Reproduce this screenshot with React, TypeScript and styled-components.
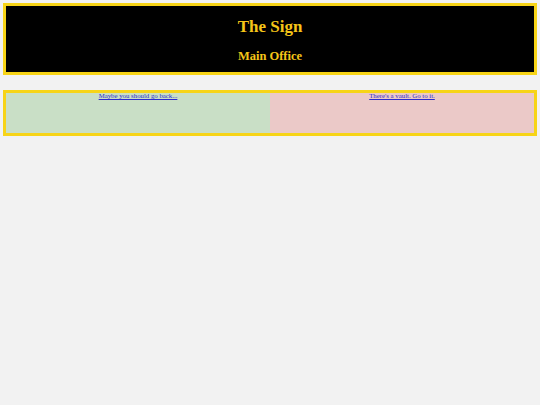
import React from "react"
import styled, { createGlobalStyle } from "styled-components"

const GlobalStyle = createGlobalStyle`
  html, body {
    margin: 0;
    padding: 0;
    background: #f2f2f2;
    font-family: "Liberation Serif", "Times New Roman", serif;
  }
`

const Page = styled.div`
  padding: 3px;
  display: flex;
  flex-direction: column;
  gap: 15px;
`

const Sign = styled.header`
  background: #000;
  border: 3px solid #f7d417;
  height: 66px;
  display: flex;
  flex-direction: column;
  align-items: center;
  color: #f5c518;
`

const Title = styled.h1`
  margin: 11px 0 0;
  font-size: 17px;
  line-height: 20px;
  font-weight: bold;
`

const Subtitle = styled.h2`
  margin: 12px 0 0;
  font-size: 12.5px;
  line-height: 15px;
  font-weight: bold;
`

const Doors = styled.div`
  border: 3px solid #f7d417;
  display: grid;
  grid-template-columns: 1fr 1fr;
  height: 40px;
`

const Door = styled.div<{ $tint: string }>`
  background: ${({ $tint }) => $tint};
  text-align: center;
  font-size: 6.8px;
  line-height: 6px;
`

const DoorLink = styled.a`
  color: #2b2bd0;
  text-decoration: underline;
`

export default function App() {
  return (
    <>
      <GlobalStyle />
      <Page>
        <Sign>
          <Title>The Sign</Title>
          <Subtitle>Main Office</Subtitle>
        </Sign>
        <Doors>
          <Door $tint="#c9dfc6">
            <DoorLink href="#">Maybe you should go back...</DoorLink>
          </Door>
          <Door $tint="#ebc9c8">
            <DoorLink href="#">There's a vault. Go to it.</DoorLink>
          </Door>
        </Doors>
      </Page>
    </>
  )
}
